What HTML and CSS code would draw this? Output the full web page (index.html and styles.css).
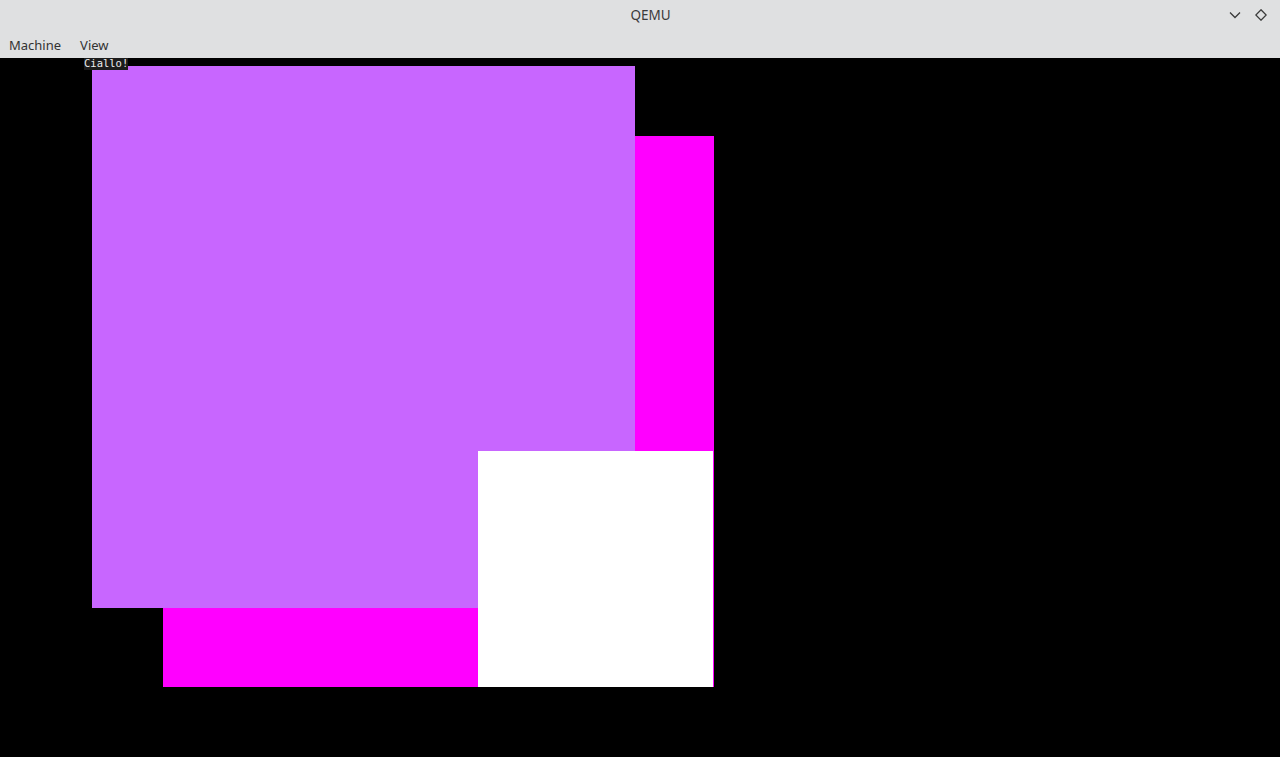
FILE: index.html
```html
<!DOCTYPE html>
<html>
<head>
<meta charset="utf-8">
<link rel="stylesheet" href="styles.css">
</head>
<body>
<div class="window">
  <header class="titlebar">
    <div class="title">QEMU</div>
    <div class="controls">
      <svg class="ctl" width="12" height="12" viewBox="0 0 12 12"><path d="M1 3.5 L6 8.5 L11 3.5" fill="none" stroke="#3a3a3a" stroke-width="1.3"/></svg>
      <svg class="ctl" width="12" height="12" viewBox="0 0 12 12"><path d="M6 0.8 L11.2 6 L6 11.2 L0.8 6 Z" fill="none" stroke="#3a3a3a" stroke-width="1.3"/></svg>
    </div>
  </header>
  <nav class="menubar">
    <span class="menu-item">Machine</span>
    <span class="menu-item">View</span>
  </nav>
  <main class="screen">
    <div class="rect magenta"></div>
    <div class="rect purple"></div>
    <div class="rect white"></div>
    <div class="label">Ciallo!</div>
  </main>
</div>
</body>
</html>
```
FILE: styles.css
```css
html, body {
  margin: 0;
  padding: 0;
  width: 1280px;
  height: 757px;
  overflow: hidden;
  background: #000;
}
.window {
  display: flex;
  flex-direction: column;
  width: 1280px;
  height: 757px;
  font-family: "Noto Sans", sans-serif;
  color: #333;
}
.titlebar {
  position: relative;
  height: 30px;
  background: #dfe0e1;
  display: flex;
  align-items: center;
  justify-content: center;
  padding-left: 21px;
}
.title {
  font-size: 13.5px;
  line-height: 30px;
  color: #3a3a3a;
}
.controls {
  position: absolute;
  right: 13px;
  top: 9px;
  display: flex;
  gap: 14px;
}
.ctl {
  display: block;
}
.menubar {
  height: 28px;
  background: #dfe0e1;
  display: flex;
  align-items: center;
  padding-left: 9px;
  gap: 19px;
  font-size: 13px;
  color: #333;
}
.menu-item {
  line-height: 28px;
  padding-top: 2px;
}
.screen {
  position: relative;
  flex: 1;
  background: #000;
  overflow: hidden;
}
.rect {
  position: absolute;
}
.purple {
  left: 92px;
  top: 8px;
  width: 543px;
  height: 542px;
  background: #c866ff;
}
.magenta {
  left: 163px;
  top: 78px;
  width: 551px;
  height: 551px;
  background: #ff00ff;
}
.white {
  left: 478px;
  top: 393px;
  width: 235px;
  height: 236px;
  background: #fff;
}
.label {
  position: absolute;
  left: 84px;
  top: 0;
  width: 44px;
  height: 12px;
  background: #1c1c1c;
  color: #ececec;
  font-family: "DejaVu Sans Mono", monospace;
  font-size: 10.5px;
  line-height: 11px;
  text-align: center;
}
```
